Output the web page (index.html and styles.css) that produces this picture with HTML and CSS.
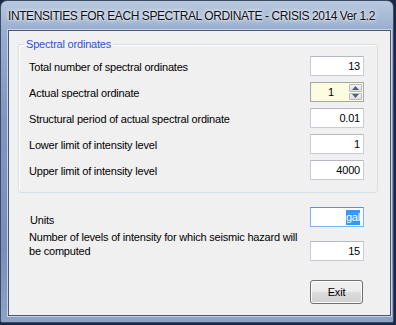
FILE: index.html
```html
<!DOCTYPE html>
<html>
<head>
<meta charset="utf-8">
<link rel="stylesheet" href="styles.css">
</head>
<body>
<div class="window">
  <div class="titlebar"><span class="title">INTENSITIES FOR EACH SPECTRAL ORDINATE - CRISIS 2014 Ver 1.2</span></div>
  <div class="client">
    <fieldset class="group">
      <legend class="group-label">Spectral ordinates</legend>
      <div class="rows">
        <div class="label">Total number of spectral ordinates</div>
        <div class="box">13</div>
        <div class="label">Actual spectral ordinate</div>
        <div class="box spin">
          <span class="spin-value">1</span>
          <span class="spin-buttons">
            <span class="spin-btn"><svg width="7" height="4" viewBox="0 0 7 4"><path d="M0 4 L3.5 0 L7 4 Z" fill="#4d6185"/></svg></span>
            <span class="spin-btn"><svg width="7" height="4" viewBox="0 0 7 4"><path d="M0 0 L3.5 4 L7 0 Z" fill="#4d6185"/></svg></span>
          </span>
        </div>
        <div class="label">Structural period of actual spectral ordinate</div>
        <div class="box">0.01</div>
        <div class="label">Lower limit of intensity level</div>
        <div class="box">1</div>
        <div class="label">Upper limit of intensity level</div>
        <div class="box">4000</div>
      </div>
    </fieldset>
    <div class="units-row">
      <div class="label units-label">Units</div>
      <div class="box focused"><span class="sel">gal</span></div>
    </div>
    <div class="levels-row">
      <div class="label levels-label">Number of levels of intensity for which seismic hazard will<br>be computed</div>
      <div class="box">15</div>
    </div>
    <div class="actions">
      <button class="btn">Exit</button>
    </div>
  </div>
</div>
</body>
</html>
```
FILE: styles.css
```css
html, body {
  margin: 0;
  padding: 0;
}
body {
  width: 396px;
  height: 325px;
  background: #1c2745;
  overflow: hidden;
  font-family: "Liberation Sans", Arial, sans-serif;
}
.window {
  width: 394px;
  height: 323px;
  box-sizing: border-box;
  border-radius: 7px 7px 2px 2px;
  background: linear-gradient(180deg, #b8c8de 0px, #a9bcd6 14px, #98add0 30px, #7f96bd 120px, #7890b8 250px, #8fa4c6 323px);
  border: 1px solid #3d4b68;
  display: flex;
  flex-direction: column;
  padding: 0 2px 6px 7px;
}
.titlebar {
  height: 28px;
  display: flex;
  align-items: center;
  padding-top: 1px;
}
.title {
  font-size: 12px;
  letter-spacing: -0.42px;
  color: #101010;
  text-shadow: 0 0 6px #ffffff, 0 0 3px #ffffff;
}
.client {
  flex: 1;
  background: #f0f0f0;
  border: 1px solid #4a5875;
  box-shadow: 0 0 0 1px #c6d3e6;
  display: flex;
  flex-direction: column;
  padding: 7px 26px 0 9px;
  font-size: 11px;
  letter-spacing: -0.2px;
  color: #000;
}
.group {
  margin: 0 -14px 0 0;
  border: 1px solid #d5dfe5;
  border-radius: 3px;
  padding: 5px 13px 12px 10px;
  box-shadow: inset 1px 1px 0 #ffffff;
}
.group-label {
  color: #2a52d8;
  padding: 0 2px;
  margin-left: -5px;
  line-height: 13px;
}
.rows {
  display: grid;
  grid-template-columns: 1fr 54px;
  grid-auto-rows: 20px;
  row-gap: 6px;
  align-items: center;
}
.label {
  line-height: 14px;
  padding-top: 2px;
}
.box {
  height: 20px;
  box-sizing: border-box;
  background: #fff;
  border: 1px solid #c9ccd4;
  border-top-color: #b5b8c0;
  text-align: right;
  padding: 0 3px 0 0;
  line-height: 18px;
  width: 54px;
}
.spin {
  display: flex;
  background: #fcfde0;
  border: 1px solid #a6a6a6;
  padding: 0;
}
.spin-value {
  flex: 1;
  text-align: center;
  padding-left: 3px;
}
.spin-buttons {
  width: 15px;
  display: flex;
  flex-direction: column;
  gap: 1px;
  padding: 1px;
  box-sizing: border-box;
  background: #fcfde0;
}
.spin-btn {
  flex: 1;
  display: flex;
  align-items: center;
  justify-content: center;
  background: linear-gradient(180deg, #f4f4f4, #dcdcdc);
  border: 1px solid #b9b9b9;
  border-radius: 1px;
}
.units-row {
  margin-top: 13px;
  display: flex;
  justify-content: space-between;
  align-items: center;
  padding-left: 12px;
}
.units-label {
  padding-top: 7px;
}
.focused {
  border: 1px solid #7eb4ea;
  border-top-color: #5c93cf;
}
.sel {
  background: #3399ff;
  color: #fff;
  padding: 1px 0 2px;
}
.levels-row {
  margin-top: 3px;
  display: flex;
  justify-content: space-between;
  align-items: flex-start;
  padding-left: 11px;
}
.levels-label {
  padding-top: 0;
}
.levels-row .box {
  margin-top: 11px;
}
.actions {
  display: flex;
  justify-content: flex-end;
  margin-top: 19px;
}
.btn {
  width: 53px;
  height: 24px;
  font-family: "Liberation Sans", Arial, sans-serif;
  font-size: 11px;
  letter-spacing: -0.2px;
  color: #000;
  border: 1px solid #707070;
  border-radius: 3px;
  background: linear-gradient(180deg, #f2f2f2 0%, #ebebeb 48%, #dddddd 52%, #cfcfcf 100%);
  box-shadow: inset 0 0 0 1px #fcfcfc;
  padding: 0;
  margin-right: 1px;
}
```
